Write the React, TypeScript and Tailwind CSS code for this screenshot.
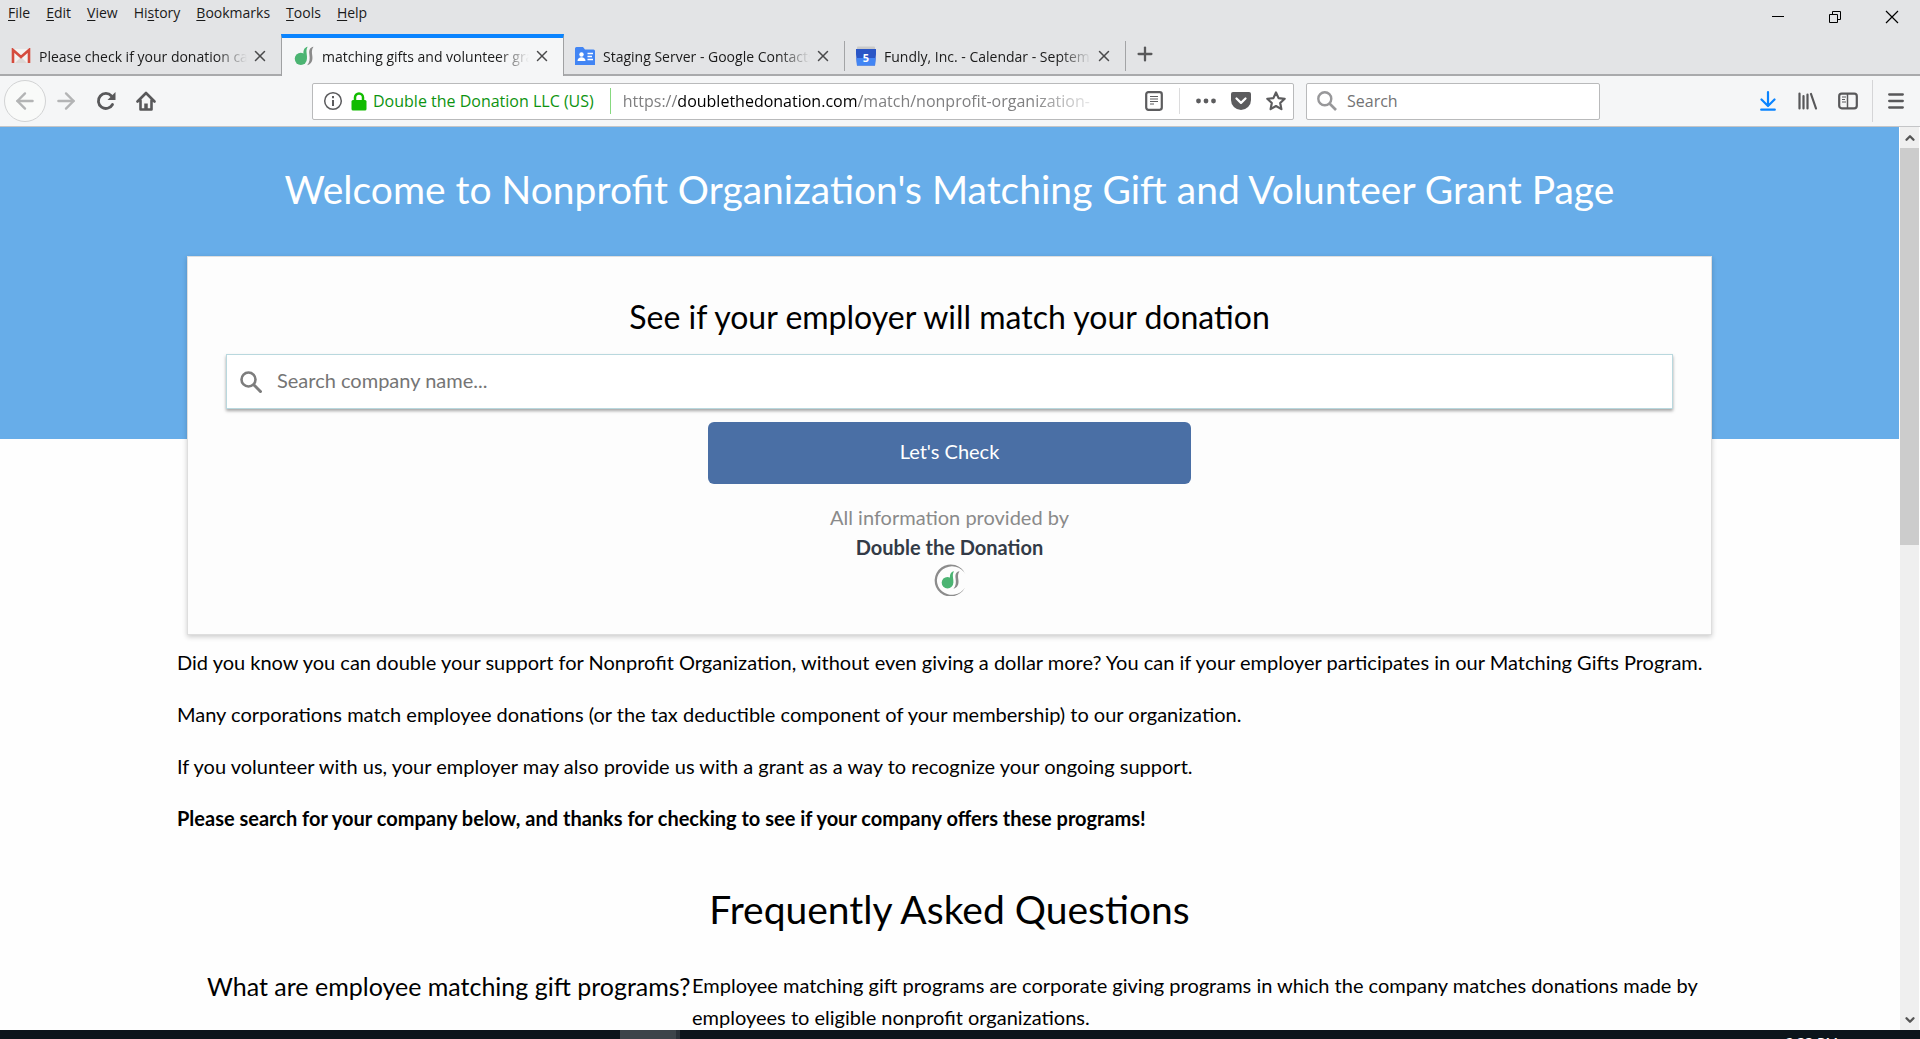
import React from "react";
import { ArrowLeft, ArrowRight, ChevronDown, ChevronUp, Plus, X } from "lucide-react";

const menus = [
  ["", "F", "ile"],
  ["", "E", "dit"],
  ["", "V", "iew"],
  ["Hi", "s", "tory"],
  ["", "B", "ookmarks"],
  ["", "T", "ools"],
  ["", "H", "elp"],
];

function GmailIcon() {
  return (
    <svg viewBox="0 0 20 16" className="h-4 w-5 shrink-0" aria-hidden="true">
      <rect x="1" y="1" width="18" height="14" rx="1" fill="#f3f1f0" />
      <path d="M4 15L10 9l6 6z" fill="#dcd8d6" />
      <path d="M2 15V2l8 7 8-7v13" fill="none" stroke="#d54b3d" strokeWidth="2.6" />
    </svg>
  );
}

function DoubleMark() {
  return (
    <>
      <circle cx="8.500" cy="15.700" r="5.800" fill="#4bb472" />
      <path d="M15 4.300C11.800 5 10.700 7.500 11 11L14.300 15.700C14.800 11.500 12.600 8 15 4.300z" fill="#4bb472" />
      <path d="M20.500 4.300C17 5 16 7.500 16.600 11.500C17.200 15.500 17 19 14.500 21.800C18.500 20.500 20 17.500 19.400 13C18.900 9.500 18.600 7 20.500 4.300z" fill="#8a8a8a" />
    </>
  );
}

function DoubleFavicon() {
  return (
    <svg viewBox="2 3.500 19 19" className="h-5 w-5 shrink-0" aria-hidden="true">
      <DoubleMark />
    </svg>
  );
}

function ContactsIcon() {
  return (
    <svg viewBox="0 0 20 18" className="h-[18px] w-5 shrink-0" aria-hidden="true">
      <path d="M0 1.500Q0 0 1.500 0H8l2 2.500h8.500Q20 2.500 20 4v14H0z" fill="#4285f4" />
      <circle cx="6.500" cy="7.500" r="2.200" fill="#fff" />
      <path d="M2.500 14c0-5 8-5 8 0z" fill="#fff" />
      <path d="M12.500 6.500H18M12.500 9.500H17M12.500 12.500H18" stroke="#fff" strokeWidth="1.300" />
    </svg>
  );
}

function CalendarIcon() {
  return (
    <svg viewBox="0 0 20 20" className="h-5 w-5 shrink-0" aria-hidden="true">
      <rect x="1" y="0.500" width="18" height="4" rx="1" fill="#c9c9c9" />
      <path d="M0 3h20v5l-1 11.500H1L0 8z" fill="#2a56c6" />
      <path d="M0.400 12h19.200L19 19.500H1z" fill="#4285f4" />
      <text x="10" y="15.500" textAnchor="middle" fontSize="11" fontWeight="700" fontFamily="Open Sans, sans-serif" fill="#fff">5</text>
    </svg>
  );
}

const tabs = [
  { title: "Please check if your donation can be matched", icon: <GmailIcon />, active: false },
  { title: "matching gifts and volunteer grants", icon: <DoubleFavicon />, active: true },
  { title: "Staging Server - Google Contacts", icon: <ContactsIcon />, active: false },
  { title: "Fundly, Inc. - Calendar - September", icon: <CalendarIcon />, active: false },
];

function MenuBar() {
  return (
    <div className="flex h-[34px] items-start justify-between">
      <nav aria-label="Application menu" className="flex gap-4 pt-[3px] pl-2 text-[14px] leading-5">
        {menus.map(([before, key, after]) => (
          <button key={before + key + after} type="button">
            {before}
            <span className="underline underline-offset-2">{key}</span>
            {after}
          </button>
        ))}
      </nav>
      <div className="flex gap-[43px] pt-2 pr-[21px]">
        <button type="button" aria-label="Minimize">
          <svg viewBox="0 0 14 18" className="h-[18px] w-3.5"><path d="M1 8.500h12" stroke="#000" /></svg>
        </button>
        <button type="button" aria-label="Restore">
          <svg viewBox="0 0 14 18" className="h-[18px] w-3.5" fill="none" stroke="#000">
            <path d="M1.500 6.500h8v8h-8zM4.500 6.500v-3h8v8h-3" />
          </svg>
        </button>
        <button type="button" aria-label="Close window">
          <svg viewBox="0 0 14 18" className="h-[18px] w-3.5"><path d="M1 3l12 12M13 3L1 15" stroke="#000" strokeWidth="1.200" /></svg>
        </button>
      </div>
    </div>
  );
}

function TabStrip() {
  return (
    <div className="flex h-[42px] border-b-2 border-[#a9aaac]">
      {tabs.map((tab, i) => (
        <div
          key={tab.title}
          className={
            tab.active
              ? "-mb-0.5 flex w-[283px] items-center border-x border-t-4 border-x-[#a0a1a3] border-t-[#0a84ff] bg-[#f5f6f7] pr-3 pb-0.5 pl-3"
              : "flex w-[281px] items-center pt-1 pr-3 pl-[11px]"
          }
        >
          {tab.icon}
          <span className="ml-2 flex-1 overflow-hidden text-[14px] whitespace-nowrap mask-r-from-85%">{tab.title}</span>
          <button type="button" aria-label={"Close " + tab.title} className="ml-1">
            <X size={18} strokeWidth={2} color="#4a4a4b" />
          </button>
          {i > 1 && <span className="-mr-3 ml-3 h-[30px] w-px bg-[#a3a4a6]" />}
        </div>
      ))}
      <button type="button" aria-label="New tab" className="ml-2">
        <Plus size={22} strokeWidth={2.5} color="#58585a" />
      </button>
    </div>
  );
}

function NavBar() {
  return (
    <div className="flex h-[51px] items-center border-b border-[#c4c5c7] bg-[#f5f6f7]">
      <div className="flex flex-1 items-center">
        <button type="button" aria-label="Back" className="ml-1 flex h-[42px] w-[42px] items-center justify-center rounded-full border border-[#d2d3d4] bg-[#f9faf9]">
          <ArrowLeft size={26} strokeWidth={2.2} color="#b3b4b5" />
        </button>
        <button type="button" aria-label="Forward" className="ml-[7px]">
          <ArrowRight size={26} strokeWidth={2.2} color="#b3b4b5" />
        </button>
        <button type="button" aria-label="Reload" className="ml-[17px]">
          <svg viewBox="0 0 20 20" className="h-5 w-5">
            <path d="M16.500 13.500A7.500 7.500 0 1 1 15.500 5" fill="none" stroke="#58585a" strokeWidth="2.800" strokeLinecap="round" />
            <path d="M19.500 1v8h-8z" fill="#58585a" />
          </svg>
        </button>
        <button type="button" aria-label="Home" className="ml-5">
          <svg viewBox="0 0 20 20" className="h-5 w-5" fill="none" stroke="#58585a" strokeWidth="2.600" strokeLinejoin="round" strokeLinecap="round">
            <path d="M1.500 10.500L10 2l8.500 8.500M4.500 9.500v9h11v-9" />
            <path d="M10 18v-5.500" strokeWidth="3.500" strokeLinecap="butt" />
          </svg>
        </button>
      </div>
      <div className="flex h-[37px] w-[982px] items-center rounded-xs border border-[#b9babb] bg-white pl-2.5">
        <button type="button" aria-label="Site information" className="flex items-center gap-2 text-[16px] text-[#0d9310]">
          <svg viewBox="0 0 20 20" className="h-5 w-5" fill="none" stroke="#5c5c5e">
            <circle cx="10" cy="10" r="8.300" strokeWidth="1.500" />
            <path d="M10 9v6M10 5v2.200" strokeWidth="2" />
          </svg>
          <svg viewBox="0 0 16 19" className="h-[19px] w-4">
            <path d="M4 9V5.500a4 4 0 0 1 8 0V9" fill="none" stroke="#12bc00" strokeWidth="2.500" />
            <rect x="0.500" y="8" width="15" height="10.500" rx="1.500" fill="#12bc00" />
          </svg>
          <span className="-ml-0.5">Double the Donation LLC (US)</span>
        </button>
        <span className="ml-4 h-[26px] w-px bg-[#86d97f]" />
        <div role="textbox" aria-label="Address" tabIndex={0} className="ml-3 w-[480px] overflow-hidden text-[16px] whitespace-nowrap text-[#7f7f80] mask-r-from-85%">
          https://<span className="text-black">doublethedonation.com</span>/match/nonprofit-organization-
        </div>
        <div className="flex flex-1 items-center justify-end pr-[7px]">
          <button type="button" aria-label="Reader view">
            <svg viewBox="0 0 18 20" className="h-5 w-[18px]" fill="none" stroke="#5c5c5e">
              <rect x="1.200" y="1.200" width="15.600" height="17.600" rx="2.200" strokeWidth="2.200" />
              <path d="M5 5.500h8M5 8h8M5 10.500h8M5 13h4" strokeWidth="1.100" />
            </svg>
          </button>
          <span className="ml-4 h-[26px] w-px bg-[#dcdcdd]" />
          <button type="button" aria-label="Page actions" className="ml-4">
            <svg viewBox="0 0 20 6" className="h-1.5 w-5" fill="#5c5c5e">
              <circle cx="2.500" cy="3" r="2.400" /><circle cx="10" cy="3" r="2.400" /><circle cx="17.500" cy="3" r="2.400" />
            </svg>
          </button>
          <button type="button" aria-label="Save to Pocket" className="ml-[15px]">
            <svg viewBox="0 0 20 18" className="h-[18px] w-5">
              <path d="M2 0h16q2 0 2 2v6a10 10 0 0 1-20 0V2q0-2 2-2z" fill="#5c5c5e" />
              <path d="M5.500 6.500L10 10.800l4.500-4.300" fill="none" stroke="#fff" strokeWidth="2.300" strokeLinecap="round" strokeLinejoin="round" />
            </svg>
          </button>
          <button type="button" aria-label="Bookmark this page" className="ml-[15px]">
            <svg viewBox="0 0 20 20" className="h-5 w-5">
              <path d="M10 1.500l2.600 5.600 6.100.7-4.500 4.200 1.200 6.100L10 15l-5.400 3.100 1.200-6.100L1.300 7.800l6.100-.7z" fill="none" stroke="#5c5c5e" strokeWidth="2.200" strokeLinejoin="round" />
            </svg>
          </button>
        </div>
      </div>
      <label className="ml-3 flex h-[37px] w-[294px] items-center rounded-xs border border-[#b9babb] bg-white pl-2.5">
        <svg viewBox="0 0 20 20" className="h-5 w-5 shrink-0" fill="none" stroke="#98989a">
          <circle cx="7.800" cy="7.800" r="6.500" strokeWidth="2.400" />
          <path d="M12.500 12.500l6.500 6.500" strokeWidth="2.600" />
        </svg>
        <input aria-label="Search the web" placeholder="Search" className="ml-2.5 w-full min-w-0 text-[16px] outline-none placeholder:text-[#737374]" />
      </label>
      <div className="flex flex-1 items-center justify-end pr-2">
        <button type="button" aria-label="Downloads">
          <svg viewBox="0 0 16 20" className="h-5 w-4" fill="none" stroke="#0a84ff" strokeWidth="2.200" strokeLinecap="round" strokeLinejoin="round">
            <path d="M8 1.200v13M1.500 8.500L8 15l6.500-6.500M1.200 18.700h13.600" />
          </svg>
        </button>
        <button type="button" aria-label="Library" className="ml-[22px]">
          <svg viewBox="0 0 20 18" className="h-[18px] w-5" fill="none" stroke="#58585a" strokeWidth="2.200" strokeLinecap="round">
            <path d="M1.500 1.500v15M5.500 4v12.500M9.500 2.500v14M13 2l5 14.500" />
          </svg>
        </button>
        <button type="button" aria-label="Sidebars" className="ml-5">
          <svg viewBox="0 0 20 18" className="h-[18px] w-5" fill="none" stroke="#58585a">
            <rect x="1.200" y="1.700" width="17.600" height="14.600" rx="2.500" strokeWidth="2.200" />
            <path d="M9.500 2v14" strokeWidth="1.500" /><path d="M4 5h4M4 7.500h3M4 10h4" />
          </svg>
        </button>
        <span className="ml-3.5 h-[42px] w-px bg-[#d5d5d7]" />
        <button type="button" aria-label="Open menu" className="mr-2 ml-[15px]">
          <svg viewBox="0 0 16 16" className="h-4 w-4" stroke="#58585a" strokeWidth="2.300" strokeLinecap="round">
            <path d="M1.200 1.500h13.600M1.200 8h13.600M1.200 14.500h13.600" />
          </svg>
        </button>
      </div>
    </div>
  );
}

function Lookup() {
  return (
    <section className="mx-[187px] border border-[#dedede] bg-[#fdfdfd] px-[38px] pt-9 pb-[38px] text-center shadow-[0_2px_5px_rgba(0,0,0,0.2)]">
      <h2 className="text-[32px] leading-[48px] text-black">See if your employer will match your donation</h2>
      <form>
        <label className="mt-[13px] flex h-[55px] items-center border border-[#b9d8de] bg-white pl-[13px] shadow-[0_2px_3px_rgba(0,0,0,0.35)]">
          <svg viewBox="0 0 22 22" className="h-[22px] w-[22px] shrink-0" fill="none" stroke="#7d7d7d">
            <circle cx="8.500" cy="8.500" r="7" strokeWidth="2.600" />
            <path d="M13.500 13.500l8 8" strokeWidth="3" />
          </svg>
          <input aria-label="Search company name" placeholder="Search company name..." className="ml-[15px] w-full min-w-0 pb-1 text-[20px] outline-none placeholder:text-[#757575]" />
        </label>
        <button type="button" className="mt-[13px] h-[62px] w-1/3 rounded-md bg-[#4a6fa5] pb-1 text-[20px] text-white">Let's Check</button>
      </form>
      <p className="mt-[18px] text-[20px] leading-[30px] text-[#8a8a8a]">All information provided by</p>
      <a href="#provider" className="block text-[20px] leading-[30px] font-bold text-[#333b47]">
        Double the Donation
        <svg viewBox="0 0 32 32" className="mx-auto mt-0.5 h-8 w-8" aria-hidden="true">
          <path d="M31.500 10.500A16 16 0 1 0 31 23.500A15 14.200 0 1 1 31.500 10.500z" fill="#8c8c8c" />
          <g transform="translate(5 3)"><DoubleMark /></g>
        </svg>
      </a>
    </section>
  );
}

export default function App() {
  return (
    <div className="flex h-screen flex-col overflow-hidden bg-[#e3e4e6] font-['Open_Sans',sans-serif] text-[#1a1a1a]">
      <header className="shrink-0">
        <MenuBar />
        <TabStrip />
        <NavBar />
      </header>
      <div className="flex min-h-0 flex-1 bg-[#fefefe]">
        <main className="flex-1 overflow-hidden font-[Lato,sans-serif] text-black">
          <div className="h-[312px] bg-[#67ade9] pt-8">
            <h1 className="text-center text-[39px] leading-[60px] text-white">Welcome to Nonprofit Organization's Matching Gift and Volunteer Grant Page</h1>
            <div className="mt-[37px]">
              <Lookup />
            </div>
          </div>
          <div className="mt-[207px] px-[177px] text-[20px] leading-8">
            <div className="flex flex-col gap-5">
              <p>Did you know you can double your support for Nonprofit Organization, without even giving a dollar more? You can if your employer participates in our Matching Gifts Program.</p>
              <p>Many corporations match employee donations (or the tax deductible component of your membership) to our organization.</p>
              <p>If you volunteer with us, your employer may also provide us with a grant as a way to recognize your ongoing support.</p>
              <p className="font-bold">Please search for your company below, and thanks for checking to see if your company offers these programs!</p>
            </div>
            <h2 className="mt-[45px] text-center text-[39px] leading-[60px]">Frequently Asked Questions</h2>
            <div className="mt-[30px] flex">
              <h3 className="w-[515px] shrink-0 pt-px pl-[30px] text-[25px] leading-8 whitespace-nowrap">What are employee matching gift programs?</h3>
              <p>Employee matching gift programs are corporate giving programs in which the company matches donations made by employees to eligible nonprofit organizations.</p>
            </div>
          </div>
        </main>
        <div className="flex w-[21px] shrink-0 flex-col items-center border-x border-[#fefefe] bg-[#efefef]">
          <button type="button" aria-label="Scroll up" className="flex h-[21px] items-center"><ChevronUp size={14} strokeWidth={4} color="#555" /></button>
          <div className="h-[397px] w-full bg-[#cccccc]" />
          <button type="button" aria-label="Scroll down" className="mt-auto flex h-[21px] items-center"><ChevronDown size={14} strokeWidth={4} color="#555" /></button>
        </div>
      </div>
      <footer className="flex h-[9px] shrink-0 overflow-hidden bg-[#0c141b] text-white">
        <div className="ml-[620px] h-full w-[60px] border-r-4 border-[#2a3138] bg-[#3d444a]" />
        <time className="mt-[3px] mr-[82px] ml-auto text-[14px] leading-5">2:33 PM</time>
      </footer>
    </div>
  );
}
